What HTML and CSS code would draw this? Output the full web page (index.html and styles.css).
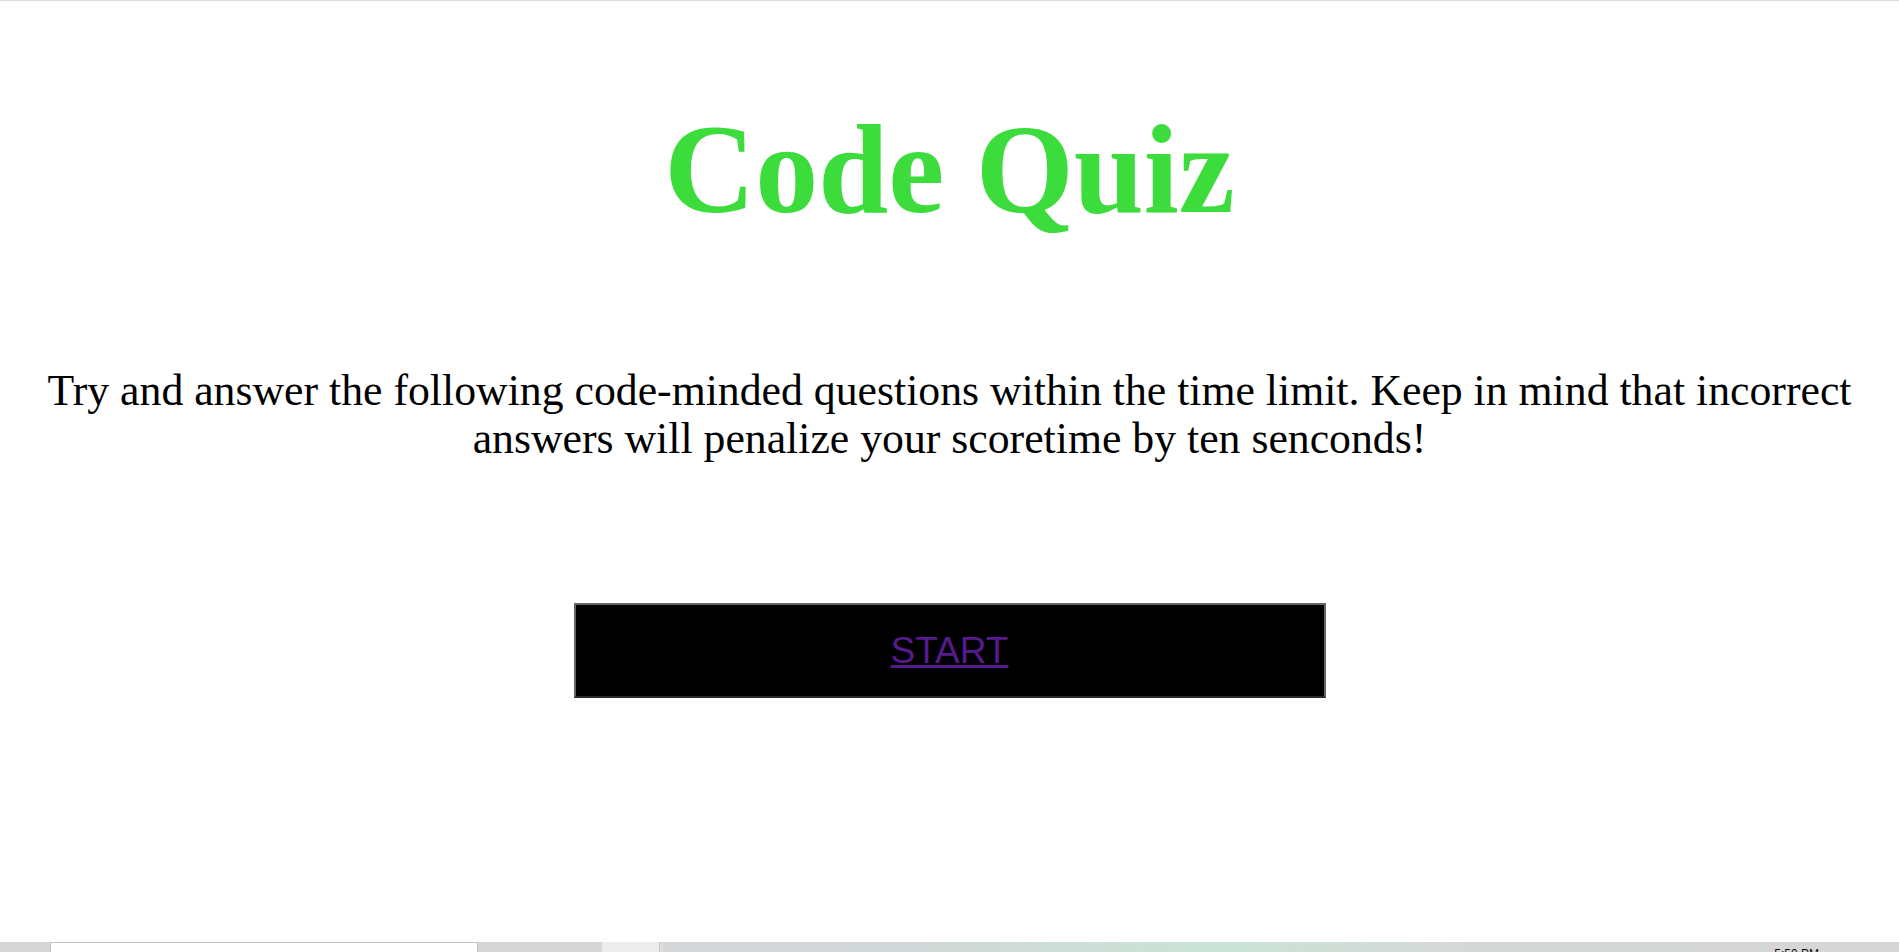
FILE: index.html
```html
<!DOCTYPE html>
<html lang="en">
<head>
<meta charset="utf-8">
<title>Code Quiz</title>
<link rel="stylesheet" href="styles.css">
</head>
<body>
<div class="page">
  <main class="content">
    <h1 class="title">Code Quiz</h1>
    <p class="intro">Try and answer the following code-minded questions within the time limit. Keep in mind that incorrect answers will penalize your scoretime by ten senconds!</p>
    <div class="start-box"><a class="start-link" href="#">START</a></div>
  </main>
  <footer class="taskbar">
    <div class="tb-seg tb-grey tb-a"></div>
    <div class="tb-seg tb-search"></div>
    <div class="tb-seg tb-grey tb-b"></div>
    <div class="tb-seg tb-light"></div>
    <div class="tb-seg tb-sep"></div>
    <div class="tb-seg tb-tray"><span class="tb-clock">5:50 PM</span></div>
  </footer>
</div>
</body>
</html>
```

FILE: styles.css
```css
html, body {
  margin: 0;
  padding: 0;
  background: #ffffff;
}
.page {
  height: 952px;
  display: flex;
  flex-direction: column;
  border-top: 1px solid #dcdce0;
  box-sizing: border-box;
  overflow: hidden;
}
.content {
  flex: 1;
  display: flex;
  flex-direction: column;
  align-items: center;
  padding: 0 8px;
}
.title {
  margin: 96px 0 0;
  font-family: "Liberation Serif", "Times New Roman", serif;
  font-weight: bold;
  font-size: 126px;
  line-height: 145px;
  color: #3bdc3b;
  text-align: center;
}
.intro {
  margin: 124px 0 0;
  font-family: "Liberation Serif", "Times New Roman", serif;
  font-size: 43.75px;
  line-height: 48px;
  color: #000;
  text-align: center;
}
.start-box {
  margin-top: 141px;
  width: 752px;
  height: 95px;
  box-sizing: border-box;
  background: #000;
  border: 2px solid #666;
  border-bottom-color: #2a2a2a;
  display: flex;
  align-items: center;
  justify-content: center;
}
.start-link {
  font-family: "Liberation Sans", Arial, sans-serif;
  font-size: 37px;
  color: #551a8b;
  text-decoration: underline;
}
.taskbar {
  height: 10px;
  display: flex;
  flex: none;
  background: #d6d6d6;
}
.tb-seg { height: 100%; box-sizing: border-box; }
.tb-grey { background: #d6d6d6; }
.tb-a { width: 50px; }
.tb-search { width: 428px; background: #fff; border: 1px solid #c4c4c4; border-bottom: none; }
.tb-b { width: 124px; }
.tb-light { width: 57px; background: #ececec; }
.tb-sep { width: 4px; background: #dcdcdc; border-left: 1px solid #c8c8c8; }
.tb-tray {
  flex: 1;
  background: linear-gradient(90deg, #d4d6d7 0%, #d2d8d8 20%, #c9e3d6 45%, #d6d8d8 65%, #d6d6d6 100%);
  display: flex;
  justify-content: flex-end;
  overflow: hidden;
}
.tb-clock {
  font-family: "Segoe UI", "Liberation Sans", sans-serif;
  font-size: 12px;
  line-height: 12px;
  color: #111;
  margin: 6px 80px 0 0;
}
```
